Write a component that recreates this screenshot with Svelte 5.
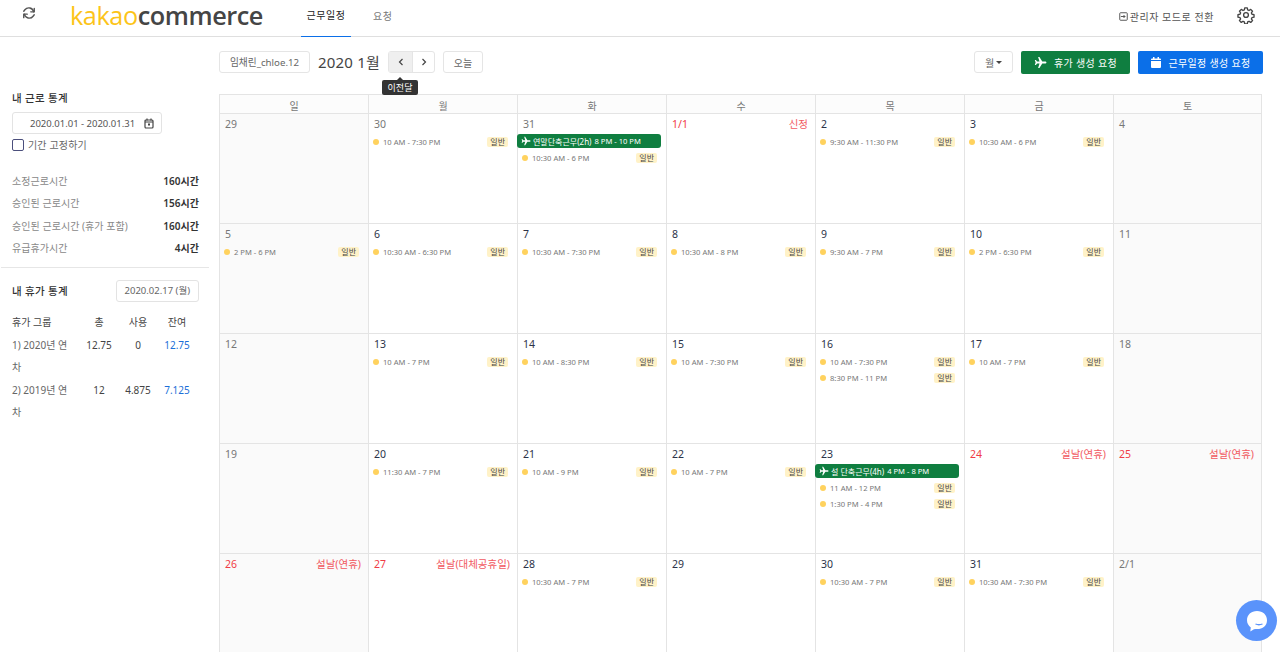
<script>
  const Y = '#ffd25e';
  const e = (t, b) => ({ t, b });
  const weeks = [
    [{ d: '29', off: 1 }, { d: '30', prev: 1, ev: [e('10 AM - 7:30 PM')] },
     { d: '31', prev: 1, lv: ['연말단축근무(2h)', '8 PM - 10 PM'], ev: [e('10:30 AM - 6 PM')] },
     { d: '1/1', red: 1, hol: '신정' }, { d: '2', ev: [e('9:30 AM - 11:30 PM')] },
     { d: '3', ev: [e('10:30 AM - 6 PM')] }, { d: '4', off: 1 }],
    [{ d: '5', off: 1, ev: [e('2 PM - 6 PM')] }, { d: '6', ev: [e('10:30 AM - 6:30 PM')] },
     { d: '7', ev: [e('10:30 AM - 7:30 PM')] }, { d: '8', ev: [e('10:30 AM - 8 PM')] },
     { d: '9', ev: [e('9:30 AM - 7 PM')] }, { d: '10', ev: [e('2 PM - 6:30 PM')] }, { d: '11', off: 1 }],
    [{ d: '12', off: 1 }, { d: '13', ev: [e('10 AM - 7 PM')] }, { d: '14', ev: [e('10 AM - 8:30 PM')] },
     { d: '15', ev: [e('10 AM - 7:30 PM')] }, { d: '16', ev: [e('10 AM - 7:30 PM'), e('8:30 PM - 11 PM')] },
     { d: '17', ev: [e('10 AM - 7 PM')] }, { d: '18', off: 1 }],
    [{ d: '19', off: 1 }, { d: '20', ev: [e('11:30 AM - 7 PM')] }, { d: '21', ev: [e('10 AM - 9 PM')] },
     { d: '22', ev: [e('10 AM - 7 PM')] },
     { d: '23', lv: ['설 단축근무(4h)', '4 PM - 8 PM'], ev: [e('11 AM - 12 PM'), e('1:30 PM - 4 PM')] },
     { d: '24', red: 1, hol: '설날(연휴)' }, { d: '25', red: 1, off: 1, hol: '설날(연휴)' }],
    [{ d: '26', red: 1, off: 1, hol: '설날(연휴)' }, { d: '27', red: 1, hol: '설날(대체공휴일)' },
     { d: '28', ev: [e('10:30 AM - 7 PM')] }, { d: '29' }, { d: '30', ev: [e('10:30 AM - 7 PM')] },
     { d: '31', ev: [e('10:30 AM - 7:30 PM')] }, { d: '2/1', off: 1 }]
  ];
  const days = ['일', '월', '화', '수', '목', '금', '토'];
  const stats = [
    ['소정근로시간', '160시간'], ['승인된 근로시간', '156시간'],
    ['승인된 근로시간 (휴가 포함)', '160시간'], ['유급휴가시간', '4시간']
  ];
  const leaves = [
    ['1) 2020년 연차', '12.75', '0', '12.75'],
    ['2) 2019년 연차', '12', '4.875', '7.125']
  ];
</script>

{#snippet plane(size)}
  <svg class="plane" width={size} height={size} viewBox="0 0 24 24"><path fill="currentColor" d="M23 12c0-1.2-1.3-2-2.6-2h-5.1L10 2H7.6l2.6 8H5.6L3.6 7.6H1.500L3 12l-1.500 4.400h2.100l2-2.400h4.600l-2.600 8H10l5.300-8h5.100c1.300 0 2.600-.8 2.600-2z"/></svg>
{/snippet}

<div class="page">
  <header class="top">
    <button class="reload" aria-label="새로고침">
      <svg width="14" height="14" viewBox="0 0 24 24" fill="none" stroke="#555" stroke-width="2.400" stroke-linecap="round" stroke-linejoin="round"><path d="M21 4v6h-6"/><path d="M3 20v-6h6"/><path d="M20 10A8.500 8.500 0 0 0 5 6.500L3 9"/><path d="M4 14a8.500 8.500 0 0 0 15 3.500l2-2.500"/></svg>
    </button>
    <div class="logo"><span class="k">kakao</span><span class="c">commerce</span></div>
    <nav class="tabs">
      <span class="tab on">근무일정</span>
      <span class="tab">요청</span>
    </nav>
    <div class="right">
      <svg width="9" height="9" viewBox="0 0 12 12" fill="none" stroke="#555" stroke-width="1.300"><rect x="1" y="1" width="10" height="10" rx="1"/><path d="M2.500 6h5.500M6 4l2 2-2 2"/></svg>
      <span class="admin">관리자 모드로 전환</span>
      <svg class="gear" width="18" height="18" viewBox="0 0 24 24" fill="none" stroke="#444" stroke-width="1.800" stroke-linejoin="round"><circle cx="12" cy="12" r="3.200"/><path d="M10.300 2.500h3.400l.5 2.700 1.800.8 2.300-1.500 2.400 2.400-1.500 2.300.8 1.800 2.700.5v3.400l-2.700.5-.8 1.800 1.500 2.300-2.400 2.400-2.300-1.500-1.800.8-.5 2.700h-3.400l-.5-2.700-1.800-.8-2.300 1.500-2.400-2.400 1.500-2.300-.8-1.800-2.700-.5v-3.400l2.700-.5.800-1.800-1.500-2.300 2.400-2.400 2.300 1.500 1.800-.8z"/></svg>
    </div>
  </header>

  <div class="body">
    <aside class="side">
      <h3 class="st first">내 근로 통계</h3>
      <div class="range">
        <span>2020.01.01 - 2020.01.31</span>
        <svg width="10" height="11" viewBox="0 0 10 11" fill="none" stroke="#444" stroke-width="1.200"><rect x="1" y="2" width="8" height="8" rx="1"/><path d="M1 4h8M3 .5v2M7 .5v2"/><rect x="4" y="5.500" width="2" height="2" fill="#444" stroke="none"/></svg>
      </div>
      <label class="fix"><span class="box"></span>기간 고정하기</label>
      <div class="stats">
        {#each stats as s}
          <div class="stat"><span>{s[0]}</span><b>{s[1]}</b></div>
        {/each}
      </div>
      <hr />
      <div class="lvhead">
        <h3 class="st">내 휴가 통계</h3>
        <span class="datebtn">2020.02.17 (월)</span>
      </div>
      <table>
        <thead><tr><th class="tl">휴가 그룹</th><th>총</th><th>사용</th><th>잔여</th></tr></thead>
        <tbody>
          {#each leaves as l}
            <tr><td class="tl name">{l[0]}</td><td>{l[1]}</td><td>{l[2]}</td><td class="blue">{l[3]}</td></tr>
          {/each}
        </tbody>
      </table>
    </aside>

    <main class="main">
      <div class="tools">
        <span class="btn who">임채린_chloe.12</span>
        <span class="title">2020 1월</span>
        <div class="pager">
          <span class="pg hover">
            <svg width="6" height="8" viewBox="0 0 6 8" fill="none" stroke="#444" stroke-width="1.200"><path d="M4.500 1 1.500 4l3 3"/></svg>
            <span class="tip">이전달</span>
          </span>
          <span class="pg">
            <svg width="6" height="8" viewBox="0 0 6 8" fill="none" stroke="#444" stroke-width="1.200"><path d="M1.500 1l3 3-3 3"/></svg>
          </span>
        </div>
        <span class="btn today">오늘</span>
        <span class="grow"></span>
        <span class="btn month">월<i class="caret"></i></span>
        <span class="cta green">{@render plane(13)}휴가 생성 요청</span>
        <span class="cta blue-bg">
          <svg width="10" height="11" viewBox="0 0 10 11" fill="#fff"><path d="M0 4h10v6a1 1 0 0 1-1 1H1a1 1 0 0 1-1-1zM1 1.500h1V0h1.500v1.500h3V0H8v1.500h1a1 1 0 0 1 1 1V3H0v-.5a1 1 0 0 1 1-1z"/></svg>
          근무일정 생성 요청
        </span>
      </div>

      <div class="cal">
        <div class="heads">
          {#each days as d}<div class="hd">{d}</div>{/each}
        </div>
        {#each weeks as w, i}
          <div class="week" class:w5={i === 4}>
            {#each w as c}
              <div class="cell" class:off={c.off}>
                <div class="dt" class:red={c.red} class:grey={(c.off && !c.red) || c.prev}>
                  <span>{c.d}</span>
                  {#if c.hol}<span class="hol">{c.hol}</span>{/if}
                </div>
                {#if c.lv}
                  <div class="leave">{@render plane(10)}<span class="lname">{c.lv[0]}</span><span>{c.lv[1]}</span></div>
                {/if}
                {#each c.ev ?? [] as v}
                  <div class="ev">
                    <i class="dot" style="background:{Y}"></i>
                    <span class="time">{v.t}</span>
                    <span class="tag">일반</span>
                  </div>
                {/each}
              </div>
            {/each}
          </div>
        {/each}
      </div>
    </main>
  </div>

  <button class="chat" aria-label="채팅">
    <svg width="24" height="24" viewBox="0 0 24 24"><path fill="#fff" d="M12 2c5.800 0 10 3.800 10 9.200S17.800 20 12 20c-1 0-2 0-3 .3L5.300 22.500l.5-4C3.500 16.700 2 14.200 2 11.200 2 5.800 6.200 2 12 2z"/><path fill="none" stroke="#5a93fb" stroke-width="1.300" d="M10.500 15c2 .9 4.800.9 7 0"/></svg>
  </button>
</div>

<style>
  :global(body) { margin: 0; background: #fff; }
  .page {
    position: relative; width: 1280px; height: 652px; overflow: hidden; background: #fff;
    font-family: "Noto Sans", "Noto Sans CJK KR", sans-serif; color: #333; font-size: 10px;
  }
  .top {
    display: flex; align-items: flex-start; height: 36px; border-bottom: 1px solid #dfdfdf;
    padding-left: 22px; padding-right: 25px;
  }
  .reload { border: 0; background: none; padding: 0; width: 16px; height: 14px; margin-top: 6px; display: flex; }
  .logo { margin-left: 32px; margin-top: 1px; font-family: "Open Sans", sans-serif; font-size: 25.300px; line-height: 28px; letter-spacing: -0.450px; }
  .k { color: #fcc419; font-weight: 400; }
  .c { color: #454545; font-weight: 600; }
  .tabs { display: flex; margin-left: 38px; height: 37px; }
  .tab { display: flex; align-items: center; justify-content: center; padding-bottom: 7px; box-sizing: border-box; color: #777; font-size: 10px; letter-spacing: .5px; height: 37px; }
  .tab.on { color: #222; width: 50px; border-bottom: 1px solid #0b6fe8; margin-right: 22px; }
  .right { margin-left: auto; display: flex; align-items: center; color: #555; height: 32px; }
  .admin { margin-left: 2px; margin-right: 23px; font-size: 10px; letter-spacing: .55px; }
  .gear { margin-bottom: 3px; }

  .body { display: flex; }
  .side { width: 219px; flex: none; box-sizing: border-box; padding: 0 20px 0 12px; position: relative; }
  .st { font-size: 10.500px; font-weight: 500; color: #333; margin: 0; line-height: 16px; letter-spacing: .3px; }
  .st.first { margin-top: 53px; }
  .range {
    margin-top: 6px; height: 22px; width: 150px; box-sizing: border-box; border: 1px solid #e3e3e3; border-radius: 3px;
    display: flex; align-items: center; justify-content: space-between; padding: 0 7px 0 17px; color: #555; font-size: 9.500px;
  }
  .fix { display: flex; align-items: center; gap: 4px; margin-top: 3px; color: #666; font-size: 10px; line-height: 16px; letter-spacing: .15px; }
  .box { width: 12px; height: 12px; box-sizing: border-box; flex: none; border: 1.500px solid #4b4f7c; border-radius: 2px; }
  .stats { margin-top: 16px; }
  .stat { display: flex; justify-content: space-between; height: 22.500px; align-items: center; color: #888; letter-spacing: .05px; }
  .stat b { color: #333; font-weight: 600; }
  hr { border: 0; border-top: 1px solid #e6e6e6; margin: 8px -10px 12px -11px; }
  .lvhead { display: flex; align-items: center; justify-content: space-between; height: 22px; }
  .datebtn { border: 1px solid #e3e3e3; border-radius: 3px; height: 20px; line-height: 20px; padding: 0 8px; color: #666; font-size: 9.500px; }
  table { border-collapse: collapse; width: 185px; table-layout: fixed; margin-top: 9px; }
  th, td { padding: 0; text-align: center; font-weight: 400; line-height: 22.500px; color: #444; vertical-align: top; }
  th { color: #444; }
  th:nth-child(1) { width: 67px; }
  th:nth-child(2) { width: 40px; }
  th:nth-child(3) { width: 38px; }
  .tl { text-align: left; }
  .name { color: #666; padding-right: 10px; }
  .blue { color: #1b6fd8; }

  .main { flex: 1; padding-right: 17px; min-width: 0; }
  .tools { display: flex; align-items: center; height: 22px; margin-top: 14px; }
  .btn {
    display: inline-flex; align-items: center; justify-content: center; height: 22px; box-sizing: border-box;
    border: 1px solid #e5e5e5; border-radius: 3px; color: #666; background: #fff; font-size: 10px;
  }
  .who { width: 91px; font-size: 9.700px; }
  .title { margin-left: 8px; margin-right: 8px; font-size: 15px; color: #444; padding-bottom: 2px; letter-spacing: .2px; }
  .pager { display: flex; border: 1px solid #e5e5e5; border-radius: 3px; height: 20px; width: 45px; }
  .pg { position: relative; width: 23px; display: flex; align-items: center; justify-content: center; box-sizing: border-box; }
  .pg + .pg { border-left: 1px solid #e5e5e5; width: 22px; }
  .pg.hover { background: #efefef; }
  .tip {
    position: absolute; top: 28px; left: -7px; width: 36px; height: 15px; background: #333; color: #fff; border-radius: 2px;
    display: flex; align-items: center; justify-content: center; font-size: 9px; z-index: 3;
  }
  .tip::before {
    content: ""; position: absolute; top: -3px; left: 15px; border: 3px solid transparent; border-top: 0; border-bottom-color: #333;
  }
  .today { width: 40px; margin-left: 8px; }
  .grow { flex: 1; }
  .month { width: 39px; margin-right: 8px; }
  .caret { display: inline-block; margin-left: 2px; border: 3px solid transparent; border-top-color: #444; border-bottom: 0; }
  .cta {
    height: 23px; display: inline-flex; align-items: center; justify-content: center; color: #fff; border-radius: 2px; font-size: 10px;
    letter-spacing: .3px;
  }
  .green { width: 109px; background: #0f7e40; margin-right: 8px; gap: 7px; }
  .blue-bg { width: 125px; background: #0b6fe8; gap: 8px; }

  .cal { margin-top: 21px; border-top: 1px solid #e4e4e4; width: 1043px; box-sizing: border-box; }
  .heads, .week { display: grid; grid-template-columns: repeat(7, minmax(0, 1fr)); }
  .hd {
    height: 18px; line-height: 22px; text-align: center; color: #777; background: #fcfcfc; border-left: 1px solid #e4e4e4;
    border-bottom: 1px solid #e4e4e4; font-size: 10px;
  }
  .hd:last-child, .cell:last-child { border-right: 1px solid #e4e4e4; }
  .week { height: 110px; }
  .week.w5 { height: 100px; }
  .cell {
    box-sizing: border-box; border-left: 1px solid #e4e4e4; border-bottom: 1px solid #e4e4e4; padding-top: 3px; min-width: 0; background: #fff;
  }
  .week.w5 .cell { border-bottom: 0; }
  .cell.off { background: #fafafa; }
  .dt { display: flex; justify-content: space-between; padding: 0 7px 0 5px; color: #2c3348; font-size: 10.500px; line-height: 14px; height: 14px; margin-bottom: 4px; }
  .dt.red { color: #f03c46; }
  .dt.grey { color: #777; }
  .hol { opacity: .85; }
  .leave {
    display: flex; align-items: center; height: 14px; background: #0f7e40; color: #fff; border-radius: 3px; font-size: 7.600px;
    margin: -1px 5px 3px -1px; padding-left: 4px; gap: 3px; white-space: nowrap;
  }
  .leave :global(.plane) { margin-right: -1px; flex: none; }
  .lname { font-size: 8px; }
  .ev { display: flex; align-items: center; height: 13.500px; padding: 0 9px 0 4px; margin-bottom: 3px; }
  .dot { width: 6px; height: 6px; border-radius: 50%; flex: none; }
  .time { margin-left: 4px; font-size: 7.600px; color: #777; white-space: nowrap; }
  .tag { margin-left: auto; background: #fff2c8; color: #444; font-size: 8px; height: 10px; line-height: 10px; padding: 0 3px; border-radius: 2px; }
  .chat {
    position: absolute; left: 1236px; top: 600px; width: 41px; height: 41px; border: 0; padding: 0; border-radius: 50%; background: #5a93fb;
    display: flex; align-items: center; justify-content: center;
  }
</style>
